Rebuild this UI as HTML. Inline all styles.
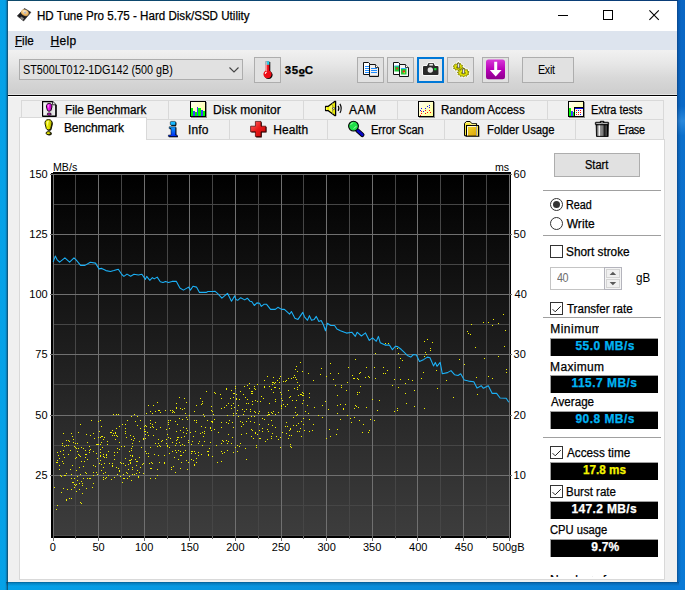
<!DOCTYPE html>
<html><head><meta charset="utf-8"><title>HD Tune Pro 5.75 - Hard Disk/SSD Utility</title>
<style>
html,body{margin:0;padding:0}
body{width:685px;height:590px;overflow:hidden;position:relative;font-family:"Liberation Sans",sans-serif;font-size:12px;color:#000;
 background:#0a78d2}
.a{position:absolute}
.t{position:absolute;white-space:pre;line-height:16px;-webkit-text-stroke:0.25px;transform-origin:0 50%}
.btn{position:absolute;box-sizing:border-box;border:1px solid #adadad;background:#e1e1e1}
.tab{position:absolute;box-sizing:border-box;border:1px solid #d9d9d9;background:#f0f0f0}
.sep{position:absolute;left:543px;width:118px;height:1px;background:#a0a0a0}
.val{position:absolute;left:550px;width:108px;height:18px;box-sizing:border-box;background:#000;border-left:1px solid #a0a0a0;border-top:1px solid #a0a0a0}
.cb{position:absolute;left:550px;width:13px;height:13px;box-sizing:border-box;border:1px solid #333;background:#fff}
</style></head>
<body>
<div class="a" style="left:0;top:0;width:685px;height:590px;background:linear-gradient(90deg,#05a2e8 0,#0a8eda 50%,#0a7ad4 100%)"></div>
<div class="a" style="left:0;top:0;width:8px;height:590px;background:linear-gradient(90deg,#05a2e8 0,#05a1e7 5px,#0890d2 6px,#0b6c9e 7px,#12465f 8px)"></div>
<div class="a" style="left:677px;top:0;width:8px;height:590px;background:linear-gradient(180deg,#0a66c4 0,#0a6ac8 18%,#2a88dc 20.500%,#0c70cc 23%,#0a72d0 60%,#0a7ad6 100%)"></div>
<div class="a" style="left:677px;top:0;width:4px;height:582px;background:linear-gradient(90deg,rgba(8,30,70,.5) 0,rgba(8,30,70,.22) 1px,rgba(8,30,70,.08) 3px,rgba(8,30,70,0) 4px)"></div>
<div class="a" style="left:7px;top:0;width:671px;height:1px;background:linear-gradient(90deg,#0e4a6a 0,#0b4474 50%,#0a3c78 100%)"></div>
<div class="a" style="left:8px;top:1px;width:669px;height:581px;background:#f0f0f0;overflow:hidden"></div>
<div class="a" style="left:8px;top:1px;width:669px;height:30px;background:#fff"></div>
<div class="a" style="left:8px;top:31px;width:669px;height:19px;background:#dde4ee"></div>
<div class="a" style="left:8px;top:50px;width:669px;height:45px;background:linear-gradient(180deg,#f1f1f1 0,#e7e7e7 30%,#d8d8d8 62%,#cecece 96%,#cecece 97.700%,#e4e4e4 97.800%)"></div>
<div class="a" style="left:8px;top:95px;width:669px;height:1px;background:#000"></div>
<div class="a" style="left:8px;top:96px;width:669px;height:1px;background:#fff"></div>
<svg class="a" style="left:550px;top:4px" width="120" height="22" viewBox="550 4 120 22"><path d="M558 15.500h10M603.500 10.500h9v9h-9z" fill="none" stroke="#000" stroke-width="1" shape-rendering="crispEdges"/><path d="M649.400 10.400l9.400 9.400M658.800 10.400l-9.400 9.400" fill="none" stroke="#000" stroke-width="1.100"/></svg>
<div class="a" style="left:19px;top:59px;width:224px;height:21px;box-sizing:border-box;border:1px solid #adadad;background:#e1e1e1"></div>
<svg class="a" style="left:228px;top:65px" width="12" height="10" viewBox="0 0 12 10"><path d="M1.5 2.5L6 7L10.5 2.5" fill="none" stroke="#444" stroke-width="1.1"/></svg>
<div class="btn" style="left:254px;top:57px;width:27px;height:26px"></div>
<div class="btn" style="left:357px;top:57px;width:27px;height:26px"></div>
<div class="btn" style="left:387px;top:57px;width:27px;height:26px"></div>
<div class="btn" style="left:447px;top:57px;width:27px;height:26px"></div>
<div class="btn" style="left:482px;top:57px;width:27px;height:26px"></div>
<div class="btn" style="left:417px;top:57px;width:27px;height:26px;border:2px solid #0078d7;background:#e5e5e5"></div>
<div class="btn" style="left:522px;top:57px;width:52px;height:26px"></div>
<div class="tab" style="left:21px;top:100px;width:148px;height:20px"></div>
<div class="tab" style="left:168px;top:100px;width:136px;height:20px"></div>
<div class="tab" style="left:303px;top:100px;width:95px;height:20px"></div>
<div class="tab" style="left:397px;top:100px;width:151px;height:20px"></div>
<div class="tab" style="left:547px;top:100px;width:117px;height:20px"></div>
<div class="tab" style="left:146px;top:119px;width:84px;height:21px"></div>
<div class="tab" style="left:229px;top:119px;width:99px;height:21px"></div>
<div class="tab" style="left:327px;top:119px;width:118px;height:21px"></div>
<div class="tab" style="left:444px;top:119px;width:132px;height:21px"></div>
<div class="tab" style="left:575px;top:119px;width:89px;height:21px"></div>
<div class="a" style="left:19px;top:139px;width:646px;height:441px;box-sizing:border-box;border:1px solid #d9d9d9;background:#fff"></div>
<div class="a" style="left:19px;top:117px;width:128px;height:23px;box-sizing:border-box;border:1px solid #d9d9d9;border-bottom:none;background:#fff"></div>
<svg class="a" style="left:0;top:0" width="685" height="590" viewBox="0 0 685 590" shape-rendering="crispEdges">
<defs><linearGradient id="cg" x1="0" y1="0" x2="0" y2="1"><stop offset="0" stop-color="#000"/><stop offset="1" stop-color="#3d3d3d"/></linearGradient></defs>
<rect x="51" y="172" width="460" height="366" fill="#000"/>
<rect x="53" y="174" width="457" height="362" fill="url(#cg)"/>
<rect x="53" y="535" width="457" height="1" fill="#4a4a4a"/>
<rect x="51" y="172" width="2" height="1" fill="#fff"/>
<path d="M75.5 174V536M121.5 174V536M167.5 174V536M212.5 174V536M258.5 174V536M303.5 174V536M349.5 174V536M395.5 174V536M440.5 174V536M486.5 174V536M53 204.5H510M53 264.5H510M53 324.5H510M53 384.5H510M53 445.5H510M53 505.5H510" stroke="#464646" stroke-width="1" fill="none"/>
<path d="M53.5 174V536M53.5 536V541M75.5 536V539M98.5 174V536M98.5 536V541M121.5 536V539M144.5 174V536M144.5 536V541M167.5 536V539M189.5 174V536M189.5 536V541M212.5 536V539M235.5 174V536M235.5 536V541M258.5 536V539M281.5 174V536M281.5 536V541M303.5 536V539M326.5 174V536M326.5 536V541M349.5 536V539M372.5 174V536M372.5 536V541M395.5 536V539M417.5 174V536M417.5 536V541M440.5 536V539M463.5 174V536M463.5 536V541M486.5 536V539M509.5 174V536M509.5 536V541M50 174.5H512M50 234.5H512M50 294.5H512M50 354.5H512M50 415.5H512M50 475.5H512" stroke="#707070" stroke-width="1" fill="none"/>
<path d="M54 487h1v1h-1zM56 462h1v1h-1zM56 509h1v1h-1zM57 452h1v1h-1zM57 460h1v1h-1zM57 462h1v1h-1zM57 505h1v1h-1zM58 455h1v1h-1zM59 458h1v1h-1zM59 465h1v1h-1zM59 469h1v1h-1zM60 451h1v1h-1zM60 475h1v1h-1zM61 476h1v1h-1zM61 492h1v1h-1zM62 443h1v1h-1zM62 445h1v1h-1zM62 461h1v1h-1zM63 433h1v1h-1zM63 450h1v1h-1zM63 454h1v1h-1zM63 463h1v1h-1zM63 488h1v1h-1zM64 446h1v1h-1zM64 457h1v1h-1zM64 475h1v1h-1zM65 475h1v1h-1zM66 440h1v1h-1zM66 445h1v1h-1zM66 473h1v1h-1zM66 499h1v1h-1zM66 500h1v1h-1zM67 489h1v1h-1zM68 440h1v1h-1zM68 445h1v1h-1zM68 454h1v1h-1zM69 441h1v1h-1zM69 498h1v1h-1zM70 450h1v1h-1zM70 469h1v1h-1zM71 433h1v1h-1zM71 474h1v1h-1zM71 478h1v1h-1zM71 489h1v1h-1zM71 498h1v1h-1zM72 436h1v1h-1zM72 465h1v1h-1zM72 482h1v1h-1zM73 439h1v1h-1zM73 442h1v1h-1zM73 482h1v1h-1zM74 446h1v1h-1zM74 478h1v1h-1zM74 484h1v1h-1zM74 487h1v1h-1zM75 443h1v1h-1zM75 447h1v1h-1zM75 458h1v1h-1zM75 485h1v1h-1zM76 448h1v1h-1zM76 457h1v1h-1zM76 470h1v1h-1zM76 484h1v1h-1zM76 491h1v1h-1zM77 443h1v1h-1zM77 451h1v1h-1zM77 476h1v1h-1zM77 480h1v1h-1zM78 432h1v1h-1zM78 448h1v1h-1zM78 454h1v1h-1zM79 455h1v1h-1zM79 467h1v1h-1zM79 483h1v1h-1zM79 489h1v1h-1zM80 424h1v1h-1zM80 456h1v1h-1zM80 474h1v1h-1zM80 502h1v1h-1zM81 447h1v1h-1zM81 461h1v1h-1zM81 481h1v1h-1zM81 503h1v1h-1zM82 483h1v1h-1zM82 485h1v1h-1zM82 493h1v1h-1zM83 448h1v1h-1zM83 466h1v1h-1zM83 478h1v1h-1zM84 461h1v1h-1zM85 450h1v1h-1zM85 454h1v1h-1zM85 457h1v1h-1zM85 472h1v1h-1zM86 434h1v1h-1zM86 454h1v1h-1zM86 473h1v1h-1zM86 488h1v1h-1zM87 442h1v1h-1zM87 459h1v1h-1zM87 478h1v1h-1zM89 446h1v1h-1zM89 450h1v1h-1zM89 452h1v1h-1zM89 478h1v1h-1zM90 435h1v1h-1zM90 449h1v1h-1zM90 478h1v1h-1zM91 420h1v1h-1zM92 487h1v1h-1zM93 433h1v1h-1zM93 451h1v1h-1zM93 465h1v1h-1zM93 472h1v1h-1zM93 475h1v1h-1zM93 483h1v1h-1zM94 438h1v1h-1zM95 466h1v1h-1zM96 444h1v1h-1zM96 453h1v1h-1zM96 472h1v1h-1zM97 444h1v1h-1zM97 458h1v1h-1zM97 474h1v1h-1zM98 421h1v1h-1zM98 437h1v1h-1zM98 444h1v1h-1zM99 431h1v1h-1zM99 463h1v1h-1zM100 420h1v1h-1zM100 437h1v1h-1zM100 444h1v1h-1zM100 449h1v1h-1zM100 452h1v1h-1zM100 455h1v1h-1zM100 456h1v1h-1zM100 460h1v1h-1zM101 426h1v1h-1zM101 436h1v1h-1zM101 442h1v1h-1zM101 464h1v1h-1zM101 470h1v1h-1zM102 436h1v1h-1zM102 447h1v1h-1zM103 439h1v1h-1zM103 454h1v1h-1zM103 456h1v1h-1zM103 467h1v1h-1zM103 473h1v1h-1zM103 477h1v1h-1zM103 479h1v1h-1zM104 437h1v1h-1zM104 457h1v1h-1zM104 463h1v1h-1zM105 472h1v1h-1zM105 478h1v1h-1zM106 454h1v1h-1zM106 455h1v1h-1zM106 457h1v1h-1zM106 477h1v1h-1zM107 441h1v1h-1zM107 444h1v1h-1zM108 451h1v1h-1zM108 475h1v1h-1zM109 463h1v1h-1zM110 432h1v1h-1zM111 432h1v1h-1zM111 479h1v1h-1zM112 430h1v1h-1zM112 435h1v1h-1zM112 463h1v1h-1zM112 465h1v1h-1zM112 466h1v1h-1zM113 414h1v1h-1zM113 433h1v1h-1zM114 435h1v1h-1zM114 452h1v1h-1zM114 455h1v1h-1zM114 459h1v1h-1zM114 477h1v1h-1zM115 432h1v1h-1zM115 433h1v1h-1zM115 439h1v1h-1zM116 414h1v1h-1zM116 428h1v1h-1zM116 435h1v1h-1zM116 467h1v1h-1zM117 436h1v1h-1zM117 448h1v1h-1zM117 452h1v1h-1zM117 474h1v1h-1zM118 414h1v1h-1zM118 468h1v1h-1zM119 426h1v1h-1zM119 442h1v1h-1zM119 449h1v1h-1zM119 470h1v1h-1zM119 471h1v1h-1zM120 462h1v1h-1zM120 476h1v1h-1zM121 446h1v1h-1zM121 463h1v1h-1zM122 424h1v1h-1zM122 482h1v1h-1zM123 463h1v1h-1zM123 474h1v1h-1zM123 478h1v1h-1zM124 446h1v1h-1zM124 478h1v1h-1zM125 424h1v1h-1zM125 428h1v1h-1zM125 431h1v1h-1zM125 433h1v1h-1zM125 458h1v1h-1zM125 465h1v1h-1zM126 437h1v1h-1zM126 472h1v1h-1zM127 420h1v1h-1zM127 473h1v1h-1zM127 478h1v1h-1zM128 464h1v1h-1zM128 469h1v1h-1zM129 451h1v1h-1zM129 460h1v1h-1zM129 476h1v1h-1zM130 435h1v1h-1zM130 455h1v1h-1zM130 460h1v1h-1zM130 462h1v1h-1zM130 463h1v1h-1zM131 416h1v1h-1zM131 439h1v1h-1zM131 448h1v1h-1zM131 450h1v1h-1zM131 459h1v1h-1zM131 480h1v1h-1zM132 443h1v1h-1zM132 446h1v1h-1zM132 455h1v1h-1zM132 456h1v1h-1zM132 467h1v1h-1zM132 469h1v1h-1zM132 474h1v1h-1zM133 436h1v1h-1zM133 440h1v1h-1zM134 414h1v1h-1zM134 438h1v1h-1zM134 474h1v1h-1zM135 421h1v1h-1zM135 459h1v1h-1zM136 461h1v1h-1zM136 465h1v1h-1zM136 473h1v1h-1zM137 416h1v1h-1zM137 425h1v1h-1zM137 461h1v1h-1zM137 470h1v1h-1zM138 476h1v1h-1zM138 477h1v1h-1zM139 441h1v1h-1zM139 457h1v1h-1zM139 472h1v1h-1zM140 420h1v1h-1zM140 428h1v1h-1zM140 467h1v1h-1zM141 447h1v1h-1zM142 464h1v1h-1zM143 438h1v1h-1zM143 439h1v1h-1zM143 463h1v1h-1zM143 473h1v1h-1zM144 426h1v1h-1zM144 429h1v1h-1zM144 431h1v1h-1zM145 425h1v1h-1zM145 431h1v1h-1zM145 434h1v1h-1zM145 438h1v1h-1zM145 451h1v1h-1zM146 413h1v1h-1zM146 426h1v1h-1zM146 453h1v1h-1zM147 432h1v1h-1zM148 405h1v1h-1zM148 435h1v1h-1zM148 453h1v1h-1zM148 456h1v1h-1zM149 463h1v1h-1zM150 411h1v1h-1zM150 420h1v1h-1zM150 423h1v1h-1zM150 427h1v1h-1zM150 447h1v1h-1zM150 468h1v1h-1zM150 478h1v1h-1zM151 462h1v1h-1zM151 468h1v1h-1zM152 413h1v1h-1zM152 424h1v1h-1zM152 426h1v1h-1zM152 463h1v1h-1zM153 405h1v1h-1zM153 427h1v1h-1zM153 435h1v1h-1zM154 454h1v1h-1zM155 411h1v1h-1zM155 422h1v1h-1zM155 443h1v1h-1zM155 478h1v1h-1zM156 429h1v1h-1zM157 402h1v1h-1zM157 446h1v1h-1zM157 469h1v1h-1zM157 475h1v1h-1zM158 410h1v1h-1zM158 439h1v1h-1zM158 443h1v1h-1zM158 455h1v1h-1zM159 410h1v1h-1zM159 445h1v1h-1zM159 462h1v1h-1zM160 412h1v1h-1zM160 427h1v1h-1zM160 446h1v1h-1zM161 441h1v1h-1zM162 440h1v1h-1zM164 455h1v1h-1zM164 462h1v1h-1zM164 463h1v1h-1zM165 410h1v1h-1zM166 429h1v1h-1zM166 439h1v1h-1zM166 443h1v1h-1zM167 434h1v1h-1zM167 445h1v1h-1zM167 446h1v1h-1zM168 420h1v1h-1zM168 422h1v1h-1zM168 424h1v1h-1zM168 437h1v1h-1zM169 428h1v1h-1zM169 447h1v1h-1zM169 453h1v1h-1zM170 410h1v1h-1zM170 420h1v1h-1zM170 438h1v1h-1zM171 467h1v1h-1zM171 469h1v1h-1zM172 410h1v1h-1zM172 412h1v1h-1zM172 442h1v1h-1zM172 451h1v1h-1zM173 411h1v1h-1zM173 466h1v1h-1zM174 412h1v1h-1zM174 457h1v1h-1zM175 421h1v1h-1zM175 445h1v1h-1zM175 450h1v1h-1zM175 472h1v1h-1zM176 403h1v1h-1zM176 407h1v1h-1zM176 408h1v1h-1zM176 431h1v1h-1zM176 440h1v1h-1zM176 443h1v1h-1zM176 452h1v1h-1zM177 424h1v1h-1zM177 437h1v1h-1zM177 439h1v1h-1zM178 437h1v1h-1zM178 450h1v1h-1zM178 459h1v1h-1zM179 397h1v1h-1zM179 418h1v1h-1zM179 442h1v1h-1zM180 408h1v1h-1zM180 430h1v1h-1zM180 445h1v1h-1zM180 451h1v1h-1zM180 455h1v1h-1zM180 468h1v1h-1zM181 437h1v1h-1zM181 455h1v1h-1zM181 462h1v1h-1zM182 409h1v1h-1zM182 419h1v1h-1zM182 444h1v1h-1zM183 427h1v1h-1zM183 432h1v1h-1zM183 452h1v1h-1zM184 398h1v1h-1zM184 408h1v1h-1zM184 436h1v1h-1zM184 445h1v1h-1zM185 413h1v1h-1zM185 450h1v1h-1zM186 402h1v1h-1zM186 417h1v1h-1zM186 428h1v1h-1zM186 433h1v1h-1zM186 460h1v1h-1zM187 419h1v1h-1zM187 430h1v1h-1zM187 469h1v1h-1zM188 440h1v1h-1zM188 442h1v1h-1zM188 462h1v1h-1zM189 415h1v1h-1zM190 432h1v1h-1zM191 444h1v1h-1zM191 451h1v1h-1zM191 453h1v1h-1zM191 459h1v1h-1zM192 441h1v1h-1zM192 451h1v1h-1zM193 436h1v1h-1zM193 460h1v1h-1zM194 411h1v1h-1zM194 420h1v1h-1zM194 451h1v1h-1zM194 464h1v1h-1zM194 465h1v1h-1zM195 431h1v1h-1zM195 453h1v1h-1zM196 405h1v1h-1zM196 420h1v1h-1zM196 422h1v1h-1zM196 458h1v1h-1zM196 462h1v1h-1zM198 443h1v1h-1zM198 452h1v1h-1zM198 455h1v1h-1zM199 441h1v1h-1zM200 398h1v1h-1zM200 433h1v1h-1zM201 404h1v1h-1zM201 426h1v1h-1zM201 454h1v1h-1zM202 401h1v1h-1zM202 403h1v1h-1zM202 432h1v1h-1zM202 445h1v1h-1zM203 414h1v1h-1zM203 436h1v1h-1zM204 416h1v1h-1zM204 431h1v1h-1zM204 433h1v1h-1zM204 441h1v1h-1zM205 427h1v1h-1zM206 391h1v1h-1zM207 420h1v1h-1zM207 451h1v1h-1zM208 451h1v1h-1zM208 454h1v1h-1zM208 455h1v1h-1zM209 448h1v1h-1zM210 427h1v1h-1zM210 428h1v1h-1zM210 442h1v1h-1zM211 406h1v1h-1zM211 410h1v1h-1zM211 421h1v1h-1zM211 430h1v1h-1zM212 411h1v1h-1zM212 421h1v1h-1zM212 422h1v1h-1zM212 456h1v1h-1zM213 414h1v1h-1zM214 392h1v1h-1zM214 419h1v1h-1zM214 429h1v1h-1zM215 393h1v1h-1zM216 445h1v1h-1zM217 462h1v1h-1zM218 432h1v1h-1zM220 394h1v1h-1zM221 398h1v1h-1zM221 408h1v1h-1zM221 422h1v1h-1zM221 427h1v1h-1zM221 443h1v1h-1zM221 451h1v1h-1zM221 461h1v1h-1zM222 440h1v1h-1zM222 453h1v1h-1zM223 441h1v1h-1zM224 407h1v1h-1zM224 452h1v1h-1zM226 388h1v1h-1zM226 389h1v1h-1zM226 405h1v1h-1zM226 422h1v1h-1zM226 440h1v1h-1zM227 415h1v1h-1zM227 443h1v1h-1zM227 450h1v1h-1zM228 403h1v1h-1zM228 423h1v1h-1zM228 434h1v1h-1zM228 441h1v1h-1zM229 420h1v1h-1zM230 398h1v1h-1zM231 390h1v1h-1zM231 405h1v1h-1zM231 408h1v1h-1zM231 443h1v1h-1zM232 422h1v1h-1zM232 437h1v1h-1zM233 393h1v1h-1zM233 397h1v1h-1zM233 403h1v1h-1zM233 413h1v1h-1zM233 415h1v1h-1zM233 427h1v1h-1zM233 452h1v1h-1zM234 393h1v1h-1zM234 407h1v1h-1zM235 386h1v1h-1zM235 388h1v1h-1zM235 447h1v1h-1zM236 394h1v1h-1zM236 398h1v1h-1zM236 399h1v1h-1zM236 413h1v1h-1zM237 410h1v1h-1zM237 445h1v1h-1zM237 451h1v1h-1zM238 405h1v1h-1zM238 416h1v1h-1zM239 399h1v1h-1zM239 446h1v1h-1zM240 391h1v1h-1zM240 421h1v1h-1zM240 443h1v1h-1zM241 426h1v1h-1zM241 434h1v1h-1zM242 409h1v1h-1zM242 422h1v1h-1zM243 394h1v1h-1zM243 414h1v1h-1zM243 424h1v1h-1zM244 386h1v1h-1zM244 411h1v1h-1zM245 397h1v1h-1zM245 448h1v1h-1zM246 403h1v1h-1zM246 409h1v1h-1zM246 421h1v1h-1zM246 433h1v1h-1zM246 459h1v1h-1zM247 385h1v1h-1zM247 399h1v1h-1zM248 403h1v1h-1zM248 418h1v1h-1zM249 383h1v1h-1zM249 388h1v1h-1zM250 409h1v1h-1zM250 411h1v1h-1zM250 421h1v1h-1zM251 391h1v1h-1zM251 393h1v1h-1zM251 416h1v1h-1zM251 429h1v1h-1zM251 436h1v1h-1zM252 391h1v1h-1zM252 393h1v1h-1zM252 401h1v1h-1zM252 404h1v1h-1zM252 430h1v1h-1zM253 438h1v1h-1zM254 386h1v1h-1zM254 388h1v1h-1zM254 411h1v1h-1zM254 416h1v1h-1zM254 422h1v1h-1zM255 389h1v1h-1zM255 400h1v1h-1zM255 412h1v1h-1zM255 432h1v1h-1zM255 433h1v1h-1zM256 445h1v1h-1zM256 447h1v1h-1zM257 384h1v1h-1zM257 401h1v1h-1zM257 434h1v1h-1zM258 413h1v1h-1zM259 411h1v1h-1zM259 424h1v1h-1zM259 430h1v1h-1zM259 438h1v1h-1zM260 401h1v1h-1zM260 438h1v1h-1zM261 396h1v1h-1zM262 418h1v1h-1zM262 428h1v1h-1zM262 431h1v1h-1zM263 398h1v1h-1zM264 380h1v1h-1zM264 386h1v1h-1zM264 387h1v1h-1zM264 419h1v1h-1zM265 441h1v1h-1zM267 376h1v1h-1zM267 415h1v1h-1zM267 429h1v1h-1zM267 439h1v1h-1zM268 412h1v1h-1zM268 414h1v1h-1zM268 424h1v1h-1zM268 431h1v1h-1zM269 386h1v1h-1zM269 403h1v1h-1zM269 414h1v1h-1zM271 389h1v1h-1zM271 412h1v1h-1zM271 420h1v1h-1zM271 436h1v1h-1zM271 438h1v1h-1zM272 382h1v1h-1zM272 384h1v1h-1zM272 413h1v1h-1zM272 425h1v1h-1zM272 433h1v1h-1zM273 377h1v1h-1zM273 382h1v1h-1zM273 392h1v1h-1zM273 411h1v1h-1zM274 383h1v1h-1zM274 387h1v1h-1zM275 382h1v1h-1zM275 387h1v1h-1zM275 399h1v1h-1zM275 401h1v1h-1zM275 414h1v1h-1zM275 427h1v1h-1zM276 436h1v1h-1zM277 380h1v1h-1zM278 412h1v1h-1zM278 439h1v1h-1zM279 378h1v1h-1zM279 382h1v1h-1zM279 388h1v1h-1zM280 376h1v1h-1zM280 392h1v1h-1zM280 437h1v1h-1zM280 447h1v1h-1zM281 394h1v1h-1zM281 398h1v1h-1zM281 405h1v1h-1zM281 406h1v1h-1zM281 408h1v1h-1zM282 400h1v1h-1zM282 432h1v1h-1zM283 381h1v1h-1zM283 404h1v1h-1zM285 381h1v1h-1zM285 406h1v1h-1zM285 426h1v1h-1zM286 380h1v1h-1zM286 422h1v1h-1zM286 433h1v1h-1zM287 404h1v1h-1zM287 426h1v1h-1zM288 378h1v1h-1zM288 390h1v1h-1zM288 438h1v1h-1zM289 397h1v1h-1zM289 430h1v1h-1zM289 435h1v1h-1zM290 396h1v1h-1zM290 428h1v1h-1zM290 429h1v1h-1zM290 444h1v1h-1zM290 446h1v1h-1zM291 378h1v1h-1zM291 435h1v1h-1zM291 447h1v1h-1zM292 400h1v1h-1zM293 377h1v1h-1zM293 417h1v1h-1zM293 425h1v1h-1zM294 375h1v1h-1zM294 388h1v1h-1zM295 369h1v1h-1zM295 377h1v1h-1zM295 407h1v1h-1zM295 412h1v1h-1zM296 366h1v1h-1zM296 379h1v1h-1zM296 400h1v1h-1zM296 415h1v1h-1zM296 425h1v1h-1zM297 371h1v1h-1zM297 382h1v1h-1zM297 387h1v1h-1zM297 389h1v1h-1zM297 414h1v1h-1zM297 431h1v1h-1zM298 395h1v1h-1zM298 423h1v1h-1zM299 385h1v1h-1zM299 431h1v1h-1zM300 362h1v1h-1zM300 394h1v1h-1zM300 428h1v1h-1zM301 394h1v1h-1zM301 421h1v1h-1zM301 436h1v1h-1zM302 371h1v1h-1zM302 392h1v1h-1zM302 395h1v1h-1zM302 403h1v1h-1zM303 393h1v1h-1zM303 395h1v1h-1zM303 400h1v1h-1zM303 418h1v1h-1zM303 424h1v1h-1zM304 430h1v1h-1zM305 411h1v1h-1zM307 405h1v1h-1zM308 373h1v1h-1zM308 413h1v1h-1zM309 393h1v1h-1zM309 397h1v1h-1zM309 419h1v1h-1zM309 431h1v1h-1zM312 430h1v1h-1zM313 380h1v1h-1zM313 424h1v1h-1zM314 407h1v1h-1zM318 415h1v1h-1zM320 374h1v1h-1zM321 368h1v1h-1zM322 405h1v1h-1zM322 417h1v1h-1zM325 401h1v1h-1zM326 376h1v1h-1zM326 438h1v1h-1zM328 409h1v1h-1zM329 429h1v1h-1zM330 363h1v1h-1zM330 373h1v1h-1zM330 436h1v1h-1zM333 379h1v1h-1zM335 385h1v1h-1zM336 434h1v1h-1zM337 395h1v1h-1zM337 405h1v1h-1zM337 413h1v1h-1zM337 429h1v1h-1zM338 373h1v1h-1zM340 404h1v1h-1zM340 419h1v1h-1zM341 385h1v1h-1zM341 387h1v1h-1zM343 408h1v1h-1zM343 409h1v1h-1zM345 404h1v1h-1zM346 390h1v1h-1zM347 382h1v1h-1zM347 415h1v1h-1zM348 367h1v1h-1zM350 418h1v1h-1zM351 422h1v1h-1zM352 375h1v1h-1zM353 378h1v1h-1zM354 378h1v1h-1zM354 408h1v1h-1zM354 417h1v1h-1zM355 359h1v1h-1zM355 405h1v1h-1zM356 406h1v1h-1zM357 378h1v1h-1zM357 392h1v1h-1zM357 394h1v1h-1zM358 379h1v1h-1zM358 407h1v1h-1zM359 373h1v1h-1zM359 392h1v1h-1zM359 420h1v1h-1zM360 372h1v1h-1zM360 386h1v1h-1zM362 432h1v1h-1zM363 424h1v1h-1zM365 377h1v1h-1zM366 367h1v1h-1zM366 407h1v1h-1zM368 376h1v1h-1zM368 432h1v1h-1zM369 377h1v1h-1zM369 430h1v1h-1zM370 419h1v1h-1zM372 399h1v1h-1zM374 367h1v1h-1zM374 420h1v1h-1zM375 353h1v1h-1zM375 378h1v1h-1zM377 410h1v1h-1zM379 400h1v1h-1zM383 367h1v1h-1zM383 373h1v1h-1zM385 343h1v1h-1zM385 373h1v1h-1zM387 370h1v1h-1zM388 343h1v1h-1zM392 385h1v1h-1zM394 379h1v1h-1zM394 411h1v1h-1zM397 348h1v1h-1zM397 408h1v1h-1zM397 410h1v1h-1zM398 353h1v1h-1zM398 387h1v1h-1zM399 367h1v1h-1zM400 358h1v1h-1zM400 379h1v1h-1zM402 360h1v1h-1zM405 383h1v1h-1zM405 393h1v1h-1zM406 403h1v1h-1zM408 379h1v1h-1zM412 380h1v1h-1zM414 390h1v1h-1zM414 406h1v1h-1zM418 359h1v1h-1zM421 378h1v1h-1zM423 372h1v1h-1zM424 341h1v1h-1zM424 356h1v1h-1zM424 408h1v1h-1zM425 352h1v1h-1zM426 354h1v1h-1zM427 339h1v1h-1zM430 348h1v1h-1zM430 350h1v1h-1zM432 342h1v1h-1zM436 370h1v1h-1zM437 388h1v1h-1zM446 380h1v1h-1zM453 397h1v1h-1zM459 359h1v1h-1zM464 364h1v1h-1zM467 331h1v1h-1zM468 333h1v1h-1zM470 334h1v1h-1zM471 324h1v1h-1zM475 347h1v1h-1zM476 377h1v1h-1zM477 394h1v1h-1zM483 322h1v1h-1zM484 358h1v1h-1zM488 322h1v1h-1zM488 376h1v1h-1zM492 325h1v1h-1zM492 378h1v1h-1zM493 319h1v1h-1zM498 323h1v1h-1zM498 356h1v1h-1zM503 314h1v1h-1zM504 346h1v1h-1zM505 330h1v1h-1zM506 369h1v1h-1zM506 372h1v1h-1z" fill="#f2f200"/>
<polyline points="53.2,261.9 55.3,256.1 57.0,259.6 59.6,262.2 64.9,257.9 69.6,262.2 74.0,257.9 76.3,260.1 80.6,265.4 85.0,265.4 90.3,262.2 95.5,263.1 99.0,268.9 101.7,268.4 106.0,270.6 110.4,271.5 113.9,270.6 118.3,269.2 121.8,274.5 123.9,276.4 127.0,274.1 130.6,276.2 134.0,274.3 138.4,275.0 141.9,274.3 145.4,279.4 146.7,276.4 149.8,280.3 152.4,277.6 154.2,278.9 157.2,277.1 160.3,281.7 163.0,282.5 165.6,281.5 168.5,282.4 172.0,281.4 176.4,281.4 179.9,288.0 183.4,290.1 188.6,287.1 190.4,290.1 193.0,286.3 196.5,287.1 199.5,292.4 206.2,292.4 207.9,291.5 212.3,291.5 214.9,291.2 217.5,293.3 221.9,298.2 227.5,293.3 231.5,301.2 234.7,295.9 235.9,299.4 237.7,300.3 240.7,297.7 244.7,299.9 247.3,298.2 249.9,301.2 251.7,301.5 254.3,305.5 256.9,302.9 259.6,303.3 261.3,306.4 263.9,304.3 266.6,304.3 270.6,309.4 275.3,309.4 277.9,307.3 281.5,309.4 284.4,309.4 289.6,314.2 291.4,311.5 294.9,318.2 298.0,319.4 302.8,312.4 304.5,316.8 307.5,320.3 309.4,315.6 311.5,320.3 314.2,319.4 316.3,316.4 318.9,321.5 321.2,320.6 323.4,324.7 325.5,330.8 327.3,323.3 330.8,325.5 334.6,325.5 336.9,329.0 340.4,330.8 346.5,333.1 351.8,332.2 355.3,336.4 357.1,332.2 361.4,336.0 365.5,332.9 369.3,340.4 372.5,337.8 376.3,341.3 378.4,336.4 380.2,342.7 385.1,345.1 389.5,345.1 392.4,349.7 395.6,346.2 397.6,346.6 401.1,349.3 403.8,351.9 407.3,355.4 410.8,357.1 413.4,354.5 416.4,355.0 419.5,361.5 423.9,359.4 427.4,357.1 430.0,357.7 433.5,365.9 435.3,362.4 437.0,366.3 440.2,362.4 442.3,373.8 447.5,372.6 451.0,370.6 454.5,374.7 458.0,375.5 460.7,373.8 464.2,379.9 468.6,381.1 473.8,381.7 477.0,388.1 481.2,385.7 483.4,388.3 488.3,385.7 492.2,393.4 496.6,393.4 500.1,398.0 506.2,398.3 508.8,402.2" fill="none" stroke="#1cb0f6" stroke-width="1.080" shape-rendering="auto" stroke-linejoin="round"/>
</svg>
<div class="btn" style="left:554px;top:153px;width:86px;height:24px"></div>
<div class="sep" style="top:190px"></div>
<div class="sep" style="top:235px"></div>
<div class="sep" style="top:317px"></div>
<div class="sep" style="top:437px"></div>
<div class="a" style="left:550px;top:198px;width:13px;height:13px;box-sizing:border-box;border:1px solid #333;border-radius:50%;background:#fff"></div>
<div class="a" style="left:553px;top:201px;width:7px;height:7px;border-radius:50%;background:#333"></div>
<div class="a" style="left:550px;top:217px;width:13px;height:13px;box-sizing:border-box;border:1px solid #333;border-radius:50%;background:#fff"></div>
<div class="cb" style="top:245px"></div>
<div class="cb" style="top:302px"><svg width="11" height="11" viewBox="0 0 11 11" style="display:block"><path d="M1.600 6.200L4.200 8.800L9.800 3.200" fill="none" stroke="#222" stroke-width="1"/></svg></div>
<div class="cb" style="top:446px"><svg width="11" height="11" viewBox="0 0 11 11" style="display:block"><path d="M1.600 6.200L4.200 8.800L9.800 3.200" fill="none" stroke="#222" stroke-width="1"/></svg></div>
<div class="cb" style="top:485px"><svg width="11" height="11" viewBox="0 0 11 11" style="display:block"><path d="M1.600 6.200L4.200 8.800L9.800 3.200" fill="none" stroke="#222" stroke-width="1"/></svg></div>
<div class="a" style="left:550px;top:267px;width:72px;height:23px;box-sizing:border-box;border:1px solid #c4c4c4;background:#fff"></div>
<div class="a" style="left:604px;top:267px;width:18px;height:23px;box-sizing:border-box;border:1px solid #b4b4bc;background:#f4f4f4"></div>
<div class="a" style="left:606px;top:269px;width:14px;height:9px;box-sizing:border-box;border:1px solid #d4d4d4;background:#f0f0f0"></div>
<div class="a" style="left:606px;top:279px;width:14px;height:9px;box-sizing:border-box;border:1px solid #d4d4d4;background:#f0f0f0"></div>
<svg class="a" style="left:604px;top:267px" width="18" height="23" viewBox="604 267 18 23"><path d="M609.600 275L612.900 271.700L616.200 275z M609.600 282L612.900 285.300L616.200 282z" fill="#5a5a5a"/></svg>
<div class="val" style="top:338px"></div>
<div class="val" style="top:375px"></div>
<div class="val" style="top:411px"></div>
<div class="val" style="top:462px"></div>
<div class="val" style="top:501px"></div>
<div class="val" style="top:539px"></div>
<div class="a" style="left:20px;top:140px;width:644px;height:439px;overflow:hidden"><div style="position:absolute;left:-20px;top:-140px;width:685px;height:590px">
</div></div>
<!-- title icon: hard disk -->
<svg class="a" style="left:14px;top:6px" width="20" height="18" viewBox="14 6 20 18">
<defs><radialGradient id="hd1" cx=".4" cy=".35" r=".75"><stop offset="0" stop-color="#fff2d8"/><stop offset=".55" stop-color="#efbc6a"/><stop offset="1" stop-color="#c0883c"/></radialGradient></defs>
<path d="M24.400 8.400L30.900 12.300L23.600 20.900L17.300 15.900z" fill="#1c1c1e" stroke="#38383a" stroke-width=".7" stroke-linejoin="round"/>
<path d="M21.300 16.400l2.800 2.100l-1.500 1.800l-2.800-2.100z" fill="#8a8680"/>
<ellipse cx="24.900" cy="12.800" rx="4" ry="3.100" transform="rotate(26 24.900 12.800)" fill="url(#hd1)"/>
<circle cx="25.100" cy="12.600" r="1.200" fill="#b4b4c0"/>
</svg>
<!-- thermometer -->
<svg class="a" style="left:259px;top:59px" width="18" height="22" viewBox="259 59 18 22">
<path d="M265.700 61.200h3.600v9.300a4.100 4.100 0 1 1-3.600 0z" fill="#0a0a0a" transform="translate(1,.7)"/>
<path d="M265.700 61.200h3.600v9.300a4.100 4.100 0 1 1-3.600 0z" fill="#ee0e18"/>
<rect x="265.700" y="61.200" width="3.600" height="3.600" fill="#1cd4ec"/>
<rect x="266" y="61.600" width="1.100" height="9.500" fill="#ffb0b0" opacity=".75"/>
<path d="M264.700 73.600q.2-1.600 1.700-2l.5 1q-1 .4-1.200 1.400z" fill="#fff"/>
</svg>
<!-- copy text -->
<svg class="a" style="left:362px;top:61px" width="18" height="17" viewBox="362 61 18 17">
<path d="M363.500 62.500h5l2 2v10h-7z" fill="#fff" stroke="#111" stroke-width="1"/>
<path d="M364.500 66.500h4M364.500 68.500h4M364.500 70.500h4M364.500 72.500h4" stroke="#1e8cff" stroke-width="1" shape-rendering="crispEdges"/>
<path d="M369.500 64.500h6l3 3v9h-9z" fill="#f0f0f0" stroke="#111" stroke-width="1"/>
<path d="M375.500 64.500v3h3" fill="#fff" stroke="#111" stroke-width=".8"/>
<path d="M371 68.500h6M371 70.500h6M371 72.500h6" stroke="#1e8cff" stroke-width="1" shape-rendering="crispEdges"/>
<path d="M370 75.500h8" stroke="#c8c8c8" stroke-width="1" shape-rendering="crispEdges"/>
</svg>
<!-- copy image -->
<svg class="a" style="left:392px;top:61px" width="18" height="17" viewBox="392 61 18 17">
<path d="M393.500 62.500h5l2 2v10h-7z" fill="#fff" stroke="#111" stroke-width="1"/>
<rect x="394.500" y="66" width="4.500" height="5.500" fill="#20c838"/><rect x="394.500" y="65.500" width="4.500" height="1" fill="#30b0f0"/><circle cx="397" cy="68.500" r="1.100" fill="#e83020"/>
<path d="M399.500 64.500h6l3 3v9h-9z" fill="#f4f4f4" stroke="#111" stroke-width="1"/>
<path d="M405.500 64.500v3h3" fill="#fff" stroke="#111" stroke-width=".8"/>
<rect x="401" y="68.500" width="5.500" height="6" fill="#20c838"/><rect x="401" y="68" width="5.500" height="1" fill="#30b0f0"/><circle cx="403.800" cy="71.500" r="1.300" fill="#e83020"/><circle cx="404.300" cy="72.800" r=".7" fill="#f0e020"/>
</svg>
<!-- camera -->
<svg class="a" style="left:421px;top:60px" width="20" height="18" viewBox="421 60 20 18">
<path d="M424 66h3l1.500-3h5l1.500 3h2.500a1 1 0 0 1 1 1v7a1 1 0 0 1-1 1h-13.500a1 1 0 0 1-1-1v-7a1 1 0 0 1 1-1z" fill="#2a2a2a" stroke="#fff" stroke-width="1.600" stroke-linejoin="round"/>
<path d="M424 66h3l1.500-3h5l1.500 3h2.500a1 1 0 0 1 1 1v7a1 1 0 0 1-1 1h-13.500a1 1 0 0 1-1-1v-7a1 1 0 0 1 1-1z" fill="#2a2a2a"/>
<rect x="429.300" y="63.800" width="3.600" height="1.800" fill="#e8e8e8"/>
<circle cx="430.300" cy="70" r="2.700" fill="#e4e4e4"/>
<rect x="434.200" y="68" width="2.200" height="2.200" fill="#10e030"/>
</svg>
<!-- gears -->
<svg class="a" style="left:450px;top:59px" width="22" height="21" viewBox="450 59 22 21">
<defs><linearGradient id="sh" x1="0" y1="0" x2="1" y2="0"><stop offset="0" stop-color="#7c7c98"/><stop offset=".5" stop-color="#e4e4f0"/><stop offset="1" stop-color="#8c8ca0"/></linearGradient></defs>
<path d="M463.04 67.45L462.87 68.02L461.50 68.16L461.19 68.54L461.66 69.50L461.07 69.88L459.85 69.40L459.30 69.57L458.92 70.55L458.14 70.60L457.53 69.68L456.95 69.58L455.86 70.21L455.19 69.91L455.43 68.90L455.04 68.57L453.66 68.60L453.36 68.07L454.35 67.36L454.30 66.92L453.16 66.35L453.33 65.78L454.70 65.64L455.01 65.26L454.54 64.30L455.13 63.92L456.35 64.40L456.90 64.23L457.28 63.25L458.06 63.20L458.67 64.12L459.25 64.22L460.34 63.59L461.01 63.89L460.77 64.90L461.16 65.23L462.54 65.20L462.84 65.73L461.85 66.44L461.90 66.88zM468.94 73.94L468.63 74.50L467.04 74.46L466.65 74.82L467.10 75.91L466.42 76.27L465.10 75.62L464.50 75.78L464.06 76.87L463.22 76.90L462.60 75.85L461.97 75.75L460.77 76.49L460.04 76.20L460.32 75.08L459.87 74.76L458.29 74.92L457.90 74.39L458.98 73.56L458.85 73.11L457.40 72.64L457.47 72.04L459.02 71.76L459.25 71.33L458.38 70.38L458.90 69.90L460.41 70.26L460.93 69.99L460.93 68.85L461.72 68.65L462.73 69.53L463.36 69.51L464.22 68.55L465.04 68.69L465.22 69.82L465.78 70.04L467.23 69.57L467.81 70.00L467.11 71.01L467.41 71.42L468.98 71.57L469.15 72.16L467.78 72.75L467.73 73.20z" fill="#fff" stroke="#fff" stroke-width="2.200" stroke-linejoin="round"/>
<path d="M458.500 61.700l1.600 2v3h-3.200v-3z" fill="#fff" stroke="#fff" stroke-width="1.800"/>
<path d="M463.04 67.45L462.87 68.02L461.50 68.16L461.19 68.54L461.66 69.50L461.07 69.88L459.85 69.40L459.30 69.57L458.92 70.55L458.14 70.60L457.53 69.68L456.95 69.58L455.86 70.21L455.19 69.91L455.43 68.90L455.04 68.57L453.66 68.60L453.36 68.07L454.35 67.36L454.30 66.92L453.16 66.35L453.33 65.78L454.70 65.64L455.01 65.26L454.54 64.30L455.13 63.92L456.35 64.40L456.90 64.23L457.28 63.25L458.06 63.20L458.67 64.12L459.25 64.22L460.34 63.59L461.01 63.89L460.77 64.90L461.16 65.23L462.54 65.20L462.84 65.73L461.85 66.44L461.90 66.88z" fill="#e6e600" stroke="#7a7a00" stroke-width=".8" stroke-linejoin="round"/>
<ellipse cx="458.300" cy="67.400" rx="2.300" ry="1.300" fill="#8c8c00"/>
<path d="M458.500 61.900l1.300 1.600h-2.600z" fill="#6c6c00"/>
<rect x="457.300" y="63.300" width="2.400" height="4.500" fill="url(#sh)" stroke="#606020" stroke-width=".5"/>
<path d="M468.94 73.94L468.63 74.50L467.04 74.46L466.65 74.82L467.10 75.91L466.42 76.27L465.10 75.62L464.50 75.78L464.06 76.87L463.22 76.90L462.60 75.85L461.97 75.75L460.77 76.49L460.04 76.20L460.32 75.08L459.87 74.76L458.29 74.92L457.90 74.39L458.98 73.56L458.85 73.11L457.40 72.64L457.47 72.04L459.02 71.76L459.25 71.33L458.38 70.38L458.90 69.90L460.41 70.26L460.93 69.99L460.93 68.85L461.72 68.65L462.73 69.53L463.36 69.51L464.22 68.55L465.04 68.69L465.22 69.82L465.78 70.04L467.23 69.57L467.81 70.00L467.11 71.01L467.41 71.42L468.98 71.57L469.15 72.16L467.78 72.75L467.73 73.20z" fill="#e6e600" stroke="#7a7a00" stroke-width=".8" stroke-linejoin="round"/>
<ellipse cx="463.500" cy="73.100" rx="2.500" ry="1.400" fill="#8c8c00"/>
<path d="M463.500 67.600l1.300 1.600h-2.600z" fill="#6c6c00"/>
<rect x="462.300" y="69" width="2.400" height="4.400" fill="url(#sh)" stroke="#606020" stroke-width=".5"/>
</svg>
<!-- magenta arrow -->
<svg class="a" style="left:485px;top:59px" width="21" height="21" viewBox="485 59 21 21">
<defs><linearGradient id="mg" x1="0" y1="0" x2="0" y2="1"><stop offset="0" stop-color="#d838d8"/><stop offset=".5" stop-color="#b800b8"/><stop offset="1" stop-color="#8c008c"/></linearGradient></defs>
<rect x="486" y="59.600" width="19" height="19.600" rx="2.500" fill="url(#mg)"/>
<path d="M494.200 61.800h3v8.200h4.400l-5.900 6.600l-5.900-6.600h4.400z" fill="#fff"/>
</svg>
<!-- File Benchmark icon -->
<svg class="a" style="left:41px;top:100px" width="17" height="18" viewBox="41 100 17 18">
<defs><linearGradient id="dg" x1="0" y1="0" x2="1" y2="0"><stop offset="0" stop-color="#fff"/><stop offset=".55" stop-color="#d4d4d4"/><stop offset="1" stop-color="#f2f2f2"/></linearGradient>
<linearGradient id="yg" x1="0" y1="0" x2="1" y2="0"><stop offset="0" stop-color="#f4f400"/><stop offset=".55" stop-color="#e0e000"/><stop offset="1" stop-color="#a8a800"/></linearGradient>
<linearGradient id="pg" x1="0" y1="0" x2="1" y2="0"><stop offset="0" stop-color="#ff30ff"/><stop offset=".6" stop-color="#e010e0"/><stop offset="1" stop-color="#a000a0"/></linearGradient></defs>
<path d="M42.600 101.600h10l3.200 3.200v11.300h-13.200z" fill="url(#dg)" stroke="#000" stroke-width="1.200"/>
<path d="M56.200 105v11.500h-13.400" fill="none" stroke="#000" stroke-width="1"/>
<path d="M52.600 101.600v3.200h3.200" fill="#fff" stroke="#000" stroke-width=".8"/>
<path d="M49.200 103.500c2.200 0 3 1.700 2.700 3.500l-.9 3.300c-.3 1.200-3.300 1.200-3.600 0l-.9-3.300c-.4-1.800.5-3.500 2.700-3.500z" fill="url(#pg)" stroke="#180818" stroke-width="1"/>
<path d="M48 105c.5-.5 1.200-.6 1.600-.4c-.6.800-.8 2.500-.7 4c-.6-1.200-1.200-2.600-.9-3.600z" fill="#ffa0ff" opacity=".8"/>
<ellipse cx="49.200" cy="114.100" rx="2" ry="1.100" fill="url(#pg)" stroke="#180818" stroke-width=".9"/>
</svg>
<!-- Benchmark icon -->
<svg class="a" style="left:43px;top:118px" width="12" height="19" viewBox="43 118 12 19">
<path d="M48.500 119.600c2.800 0 3.900 2 3.400 4.400l-1.200 4.600c-.4 1.700-4 1.700-4.400 0l-1.200-4.600c-.5-2.400.6-4.400 3.400-4.400z" fill="#0c0c00" transform="translate(.8,.8)"/>
<path d="M48.500 119.600c2.800 0 3.900 2 3.400 4.400l-1.200 4.600c-.4 1.700-4 1.700-4.400 0l-1.200-4.600c-.5-2.400.6-4.400 3.400-4.400z" fill="url(#yg)" stroke="#1c1c00" stroke-width="1"/>
<path d="M46.900 121.300c.7-.8 1.800-.8 2.200-.4c-.9 1-1.200 3.800-1 6c-.9-1.900-1.700-4.200-1.200-5.600z" fill="#ffffa0" opacity=".8"/>
<ellipse cx="49.300" cy="133.800" rx="2.600" ry="1.700" fill="#0c0c00"/>
<ellipse cx="48.500" cy="133.100" rx="2.500" ry="1.500" fill="url(#yg)" stroke="#1c1c00" stroke-width="1"/>
</svg>
<!-- Disk monitor icon -->
<svg class="a" style="left:189px;top:100px" width="19" height="19" viewBox="189 100 19 19" shape-rendering="crispEdges">
<defs><linearGradient id="cr" x1="0" y1="0" x2="1" y2="1"><stop offset="0" stop-color="#fffff4"/><stop offset="1" stop-color="#ffff90"/></linearGradient></defs>
<rect x="191" y="102" width="16" height="16" fill="#000" opacity=".4"/><rect x="190" y="101" width="16" height="16" fill="#000"/><rect x="191" y="102" width="14" height="14" fill="url(#cr)"/>
<path d="M191 108h2v8h-2zM195 112h2v4h-2zM198 108h3v8h-3zM203 111h2v5h-2z" fill="#00f800"/>
<path d="M193 111h2v5h-2zM197 107h1v9h-1zM201 110h2v6h-2z" fill="#3c3cff"/>
</svg>
<!-- Info icon -->
<svg class="a" style="left:167px;top:120px" width="12" height="18" viewBox="167 120 12 18">
<defs><linearGradient id="ib" x1="0" y1="0" x2="0" y2="1"><stop offset="0" stop-color="#10a0ff"/><stop offset="1" stop-color="#0028f0"/></linearGradient></defs>
<g transform="translate(.7,.7)" fill="#000"><rect x="170.300" y="121.400" width="5.400" height="3.800" rx="1"/><path d="M169.200 126.800h6.500v8.200h1.500v1.600h-8.800v-1.600h2.600v-6.400h-1.800z"/></g>
<rect x="170.300" y="121.400" width="5.400" height="3.800" rx="1" fill="#18b8ff" stroke="#000" stroke-width=".5"/>
<path d="M169.200 126.800h6.500v8.200h1.500v1.600h-8.800v-1.600h2.600v-6.400h-1.800z" fill="url(#ib)" stroke="#000" stroke-width=".5"/>
</svg>
<!-- Health icon -->
<svg class="a" style="left:249px;top:120px" width="19" height="19" viewBox="249 120 19 19">
<defs><linearGradient id="rc" x1="0" y1="0" x2="1" y2="1"><stop offset="0" stop-color="#ff6868"/><stop offset=".5" stop-color="#e81818"/><stop offset="1" stop-color="#c00808"/></linearGradient></defs>
<path d="M255.400 121.400h5.600v4.800h4.800v5.600h-4.800v4.800h-5.600v-4.800h-4.800v-5.600h4.800z" fill="#200" transform="translate(.8,.8)"/>
<path d="M255.400 121.400h5.600v4.800h4.800v5.600h-4.800v4.800h-5.600v-4.800h-4.800v-5.600h4.800z" fill="url(#rc)" stroke="#400" stroke-width=".7"/>
</svg>
<!-- AAM speaker -->
<svg class="a" style="left:323px;top:99px" width="21" height="19" viewBox="323 99 21 19">
<path d="M325.600 106.400h2.400l6.700-5h.9v14.200h-.9l-6.700-5h-2.400z" fill="#f0f000" stroke="#000" stroke-width="1.300" stroke-linejoin="round"/>
<path d="M329 107l3-2.400v7.600l-3-2.300z" fill="#ffff70" opacity=".8"/>
<ellipse cx="326.500" cy="108.400" rx=".7" ry="1.500" fill="#ffff60"/>
<path d="M332.700 102.600v11.800" stroke="#77776a" stroke-width="1" stroke-dasharray="1.500 1"/>
<circle cx="333.600" cy="108.500" r="1.100" fill="#d8d8d8" stroke="#222" stroke-width=".6"/>
<path d="M338.100 105.900q1.700 2.500 0 5M339.900 103.900q2.700 4.500 0 9" fill="none" stroke="#000" stroke-width="1.100"/>
</svg>
<!-- Error scan magnifier -->
<svg class="a" style="left:346px;top:119px" width="20" height="20" viewBox="346 119 20 20">
<path d="M357.300 130.300l5 4.500" stroke="#000" stroke-width="4.400" stroke-linecap="round"/>
<path d="M357.300 130.300l5 4.500" stroke="#0808c8" stroke-width="2.600" stroke-linecap="round"/>
<circle cx="353.500" cy="126.100" r="4.900" fill="#20e048" stroke="#000" stroke-width="1.100"/>
<path d="M350.800 124.600l2-2M353.800 128.600l2.400-2.400" stroke="#d0ffd8" stroke-width=".9"/>
</svg>
<!-- Random access icon -->
<svg class="a" style="left:417px;top:100px" width="19" height="19" viewBox="417 100 19 19" shape-rendering="crispEdges">
<rect x="419" y="102" width="16" height="16" fill="#000" opacity=".4"/><rect x="418" y="101" width="16" height="16" fill="#000"/><rect x="419" y="102" width="14" height="14" fill="url(#cr)"/>
<path d="M429 105h1v1h-1zM427 106h1v1h-1zM429 107h1v1h-1zM421 108h1v1h-1zM425 108h1v1h-1zM420 110h1v1h-1zM423 111h1v1h-1z" fill="#1010ff"/>
<path d="M425 110h1v1h-1zM429 110h1v1h-1zM421 111h1v1h-1zM427 112h1v1h-1zM430 112h1v1h-1zM421 113h1v1h-1zM425 113h1v1h-1zM420 115h1v1h-1z" fill="#ff1010"/>
</svg>
<!-- Folder icon -->
<svg class="a" style="left:462px;top:119px" width="20" height="20" viewBox="462 119 20 20">
<defs><linearGradient id="fg" x1="0" y1="0" x2="1" y2="1"><stop offset="0" stop-color="#f4dc30"/><stop offset=".5" stop-color="#e8bc18"/><stop offset="1" stop-color="#d89c08"/></linearGradient></defs>
<path d="M467.300 126.300h12.400v10.700h-14.400v-12z" fill="#000" opacity=".45"/>
<path d="M464.500 123.400l1.800-1.900h3.800l1.700 2.100h4.800v2.400h-10v9.700h-2.100z" fill="#f6e63c" stroke="#000" stroke-width="1" stroke-linejoin="round"/>
<path d="M466 122.600h3.800l1.400 1.700h4.600" fill="none" stroke="#fffcc0" stroke-width=".8"/>
<rect x="466.500" y="125.500" width="12" height="10.600" fill="url(#fg)" stroke="#000" stroke-width="1"/>
<path d="M467.500 135.400v-8.900h8.500" fill="none" stroke="#fffff0" stroke-width=".9"/>
<rect x="476" y="126" width="1" height="9.600" fill="#a4a4a4"/>
<rect x="477" y="126" width="1" height="9.600" fill="#f8e444"/>
</svg>
<!-- Extra tests icon -->
<svg class="a" style="left:567px;top:100px" width="19" height="19" viewBox="567 100 19 19" shape-rendering="crispEdges">
<rect x="569" y="102" width="16" height="16" fill="#000" opacity=".4"/><rect x="568" y="101" width="16" height="16" fill="#000"/><rect x="569" y="102" width="14" height="14" fill="url(#cr)"/>
<path d="M569 108h2v8h-2zM573 112h1v4h-1z" fill="#00f800"/><rect x="571" y="111" width="2" height="5" fill="#3c3cff"/>
<rect x="574" y="107" width="10" height="10" fill="#000"/>
<rect x="575" y="108" width="8" height="1" fill="#0808f0"/>
<rect x="575" y="109" width="8" height="7" fill="#fcfcf4"/>
<path d="M576 110h1v1h-1zM580 110h1v1h-1zM578 112h1v1h-1zM580 112h1v1h-1zM576 114h1v1h-1zM578 114h1v1h-1z" fill="#ff1010"/>
<path d="M578 110h1v1h-1zM580 114h1v1h-1z" fill="#1010ff"/>
<path d="M576 112h1v1h-1z" fill="#10b020"/>
</svg>
<!-- Erase trash -->
<svg class="a" style="left:593px;top:119px" width="19" height="20" viewBox="593 119 19 20">
<defs><linearGradient id="tg" x1="0" y1="0" x2="1" y2="0"><stop offset="0" stop-color="#000"/><stop offset=".1" stop-color="#707070"/><stop offset=".27" stop-color="#f4f4f4"/><stop offset=".36" stop-color="#8c8c8c"/><stop offset=".55" stop-color="#7c7c7c"/><stop offset=".68" stop-color="#1c1c1c"/><stop offset=".85" stop-color="#4c4c4c"/><stop offset=".94" stop-color="#000"/></linearGradient></defs>
<path d="M597 125h12v12h-12z" fill="#000" opacity=".35"/>
<path d="M600.300 122.500v-1.200h3.600v1.200" fill="#555" stroke="#000" stroke-width="1"/>
<rect x="595.300" y="122.200" width="13.400" height="2.600" rx=".6" fill="#1a1a1a" stroke="#000" stroke-width=".7"/>
<rect x="596.200" y="123" width="11.400" height=".9" fill="#c4c4c4"/>
<circle cx="602" cy="122.800" r="1" fill="#8a8a8a"/>
<path d="M596.200 124.800h12l-.3 11.600h-11.400z" fill="url(#tg)" stroke="#000" stroke-width=".9"/>
</svg>

<span class="t" style="left:37.23px;top:7.64px;font-size:12px;transform:scaleX(0.9658);">HD Tune Pro 5.75 - Hard Disk/SSD Utility</span>
<span class="t" style="left:14.63px;top:32.74px;font-size:12px;transform:scaleX(0.9667);"><u>F</u>ile</span>
<span class="t" style="left:50.50px;top:32.74px;font-size:12px;letter-spacing:0.333px;"><u>H</u>elp</span>
<span class="t" style="left:22.50px;top:61.84px;font-size:12px;transform:scaleX(0.9000);-webkit-text-stroke:0;">ST500LT012-1DG142 (500 gB)</span>
<span class="t" style="left:538.40px;top:61.84px;font-size:12px;letter-spacing:-0.370px;transform:scaleX(0.9000);-webkit-text-stroke:0;">Exit</span>
<span class="t" style="left:65.22px;top:101.84px;font-size:12px;transform:scaleX(0.9756);">File Benchmark</span>
<span class="t" style="left:213.00px;top:101.84px;font-size:12px;letter-spacing:0.100px;">Disk monitor</span>
<span class="t" style="left:349.10px;top:101.84px;font-size:12px;letter-spacing:0.450px;">AAM</span>
<span class="t" style="left:440.93px;top:101.84px;font-size:12px;transform:scaleX(0.9651);">Random Access</span>
<span class="t" style="left:591.19px;top:101.84px;font-size:12px;transform:scaleX(0.9071);">Extra tests</span>
<span class="t" style="left:63.90px;top:119.84px;font-size:12px;letter-spacing:-0.088px;">Benchmark</span>
<span class="t" style="left:188.10px;top:121.84px;font-size:12px;letter-spacing:0.067px;">Info</span>
<span class="t" style="left:273.20px;top:121.84px;font-size:12px;letter-spacing:0.060px;">Health</span>
<span class="t" style="left:371.18px;top:121.84px;font-size:12px;transform:scaleX(0.9196);">Error Scan</span>
<span class="t" style="left:487.36px;top:121.84px;font-size:12px;transform:scaleX(0.9380);">Folder Usage</span>
<span class="t" style="left:618.30px;top:121.84px;font-size:12px;letter-spacing:-0.361px;transform:scaleX(0.9000);">Erase</span>
<span class="t" style="left:584.88px;top:156.84px;font-size:12px;transform:scaleX(0.9160);">Start</span>
<span class="t" style="left:566.10px;top:196.84px;font-size:12px;transform:scaleX(0.9000);">Read</span>
<span class="t" style="left:566.70px;top:215.84px;font-size:12px;letter-spacing:0.075px;">Write</span>
<span class="t" style="left:565.82px;top:243.64px;font-size:12px;transform:scaleX(0.9841);">Short stroke</span>
<span class="t" style="left:556.70px;top:269.64px;font-size:12px;color:#6d6d6d;letter-spacing:-0.556px;transform:scaleX(0.9000);-webkit-text-stroke:0;">40</span>
<span class="t" style="left:636.23px;top:270.24px;font-size:12px;transform:scaleX(0.9692);-webkit-text-stroke:0;">gB</span>
<span class="t" style="left:566.60px;top:300.54px;font-size:12px;transform:scaleX(0.9618);">Transfer rate</span>
<div class="a" style="left:550px;top:320px;width:49px;height:17px;overflow:hidden"><span class="t" style="left:0.20px;top:0.64px;font-size:12px;letter-spacing:0.500px;">Minimum</span></div>
<span class="t" style="left:550.10px;top:359.14px;font-size:12px;letter-spacing:0.333px;">Maximum</span>
<span class="t" style="left:550.70px;top:393.64px;font-size:12px;transform:scaleX(0.9682);">Average</span>
<span class="t" style="left:566.50px;top:444.94px;font-size:12px;transform:scaleX(0.9766);">Access time</span>
<span class="t" style="left:565.84px;top:483.64px;font-size:12px;transform:scaleX(0.9608);">Burst rate</span>
<span class="t" style="left:550.07px;top:521.54px;font-size:12px;transform:scaleX(0.9333);">CPU usage</span>
<div class="a" style="left:550px;top:570px;width:110px;height:7px;overflow:hidden"><span class="t" style="left:0.00px;top:1.84px;font-size:12px;">Number of passes</span></div>
<span class="t" style="left:575.40px;top:338.14px;font-size:12px;font-weight:bold;color:#00b4f4;letter-spacing:0.463px;">55.0 MB/s</span>
<span class="t" style="left:571.50px;top:375.14px;font-size:12px;font-weight:bold;color:#00b4f4;letter-spacing:0.456px;">115.7 MB/s</span>
<span class="t" style="left:575.40px;top:411.14px;font-size:12px;font-weight:bold;color:#00b4f4;letter-spacing:0.463px;">90.8 MB/s</span>
<span class="t" style="left:582.52px;top:462.14px;font-size:12px;font-weight:bold;color:#f4f400;transform:scaleX(0.9767);">17.8 ms</span>
<span class="t" style="left:571.50px;top:501.14px;font-size:12px;font-weight:bold;color:#fff;letter-spacing:0.344px;">147.2 MB/s</span>
<span class="t" style="left:591.30px;top:539.14px;font-size:12px;font-weight:bold;color:#fff;letter-spacing:0.167px;">9.7%</span>
<span class="t" style="left:284.80px;top:62.32px;font-size:11.5px;font-weight:bold;letter-spacing:0.467px;">35<span style="font-family:'DejaVu Sans',sans-serif;font-size:12.5px;position:relative;top:3.5px;letter-spacing:0;margin:0 -0.6px 0 -0.2px">º</span>C</span>
<span class="t" style="left:53.13px;top:158.99px;font-size:11px;transform:scaleX(0.9667);-webkit-text-stroke:0;">MB/s</span>
<span class="t" style="left:495.14px;top:159.29px;font-size:11px;transform:scaleX(0.9615);-webkit-text-stroke:0;">ms</span>
<span class="t" style="left:29.30px;top:165.89px;font-size:11px;-webkit-text-stroke:0;">150</span>
<span class="t" style="left:29.30px;top:225.89px;font-size:11px;-webkit-text-stroke:0;">125</span>
<span class="t" style="left:29.30px;top:285.89px;font-size:11px;-webkit-text-stroke:0;">100</span>
<span class="t" style="left:35.30px;top:345.89px;font-size:11px;-webkit-text-stroke:0;">75</span>
<span class="t" style="left:35.30px;top:406.89px;font-size:11px;-webkit-text-stroke:0;">50</span>
<span class="t" style="left:35.30px;top:466.89px;font-size:11px;-webkit-text-stroke:0;">25</span>
<span class="t" style="left:513.60px;top:166.39px;font-size:11px;-webkit-text-stroke:0;">60</span>
<span class="t" style="left:513.60px;top:226.39px;font-size:11px;-webkit-text-stroke:0;">50</span>
<span class="t" style="left:514.60px;top:286.39px;font-size:11px;-webkit-text-stroke:0;">40</span>
<span class="t" style="left:513.60px;top:346.39px;font-size:11px;-webkit-text-stroke:0;">30</span>
<span class="t" style="left:513.60px;top:407.39px;font-size:11px;-webkit-text-stroke:0;">20</span>
<span class="t" style="left:513.60px;top:467.39px;font-size:11px;-webkit-text-stroke:0;">10</span>
<span class="t" style="left:49.80px;top:539.19px;font-size:11px;-webkit-text-stroke:0;">0</span>
<span class="t" style="left:92.40px;top:539.19px;font-size:11px;-webkit-text-stroke:0;">50</span>
<span class="t" style="left:135.00px;top:539.19px;font-size:11px;-webkit-text-stroke:0;">100</span>
<span class="t" style="left:180.60px;top:539.19px;font-size:11px;-webkit-text-stroke:0;">150</span>
<span class="t" style="left:226.20px;top:539.19px;font-size:11px;-webkit-text-stroke:0;">200</span>
<span class="t" style="left:271.80px;top:539.19px;font-size:11px;-webkit-text-stroke:0;">250</span>
<span class="t" style="left:317.40px;top:539.19px;font-size:11px;-webkit-text-stroke:0;">300</span>
<span class="t" style="left:363.00px;top:539.19px;font-size:11px;-webkit-text-stroke:0;">350</span>
<span class="t" style="left:409.10px;top:539.19px;font-size:11px;-webkit-text-stroke:0;">400</span>
<span class="t" style="left:454.70px;top:539.19px;font-size:11px;-webkit-text-stroke:0;">450</span>
<span class="t" style="left:492.40px;top:539.19px;font-size:11px;letter-spacing:0.125px;-webkit-text-stroke:0;">500gB</span>
<div class="a" style="left:540px;top:579px;width:130px;height:3px;background:#f0f0f0"></div>
<div class="a" style="left:540px;top:579px;width:125px;height:1px;background:#d9d9d9"></div>
<div class="a" style="left:6px;top:582px;width:673px;height:4px;background:linear-gradient(180deg,rgba(0,20,50,.5) 0,rgba(0,20,50,.22) 1px,rgba(0,20,50,.08) 3px,rgba(0,20,50,0) 4px)"></div>
</body></html>
